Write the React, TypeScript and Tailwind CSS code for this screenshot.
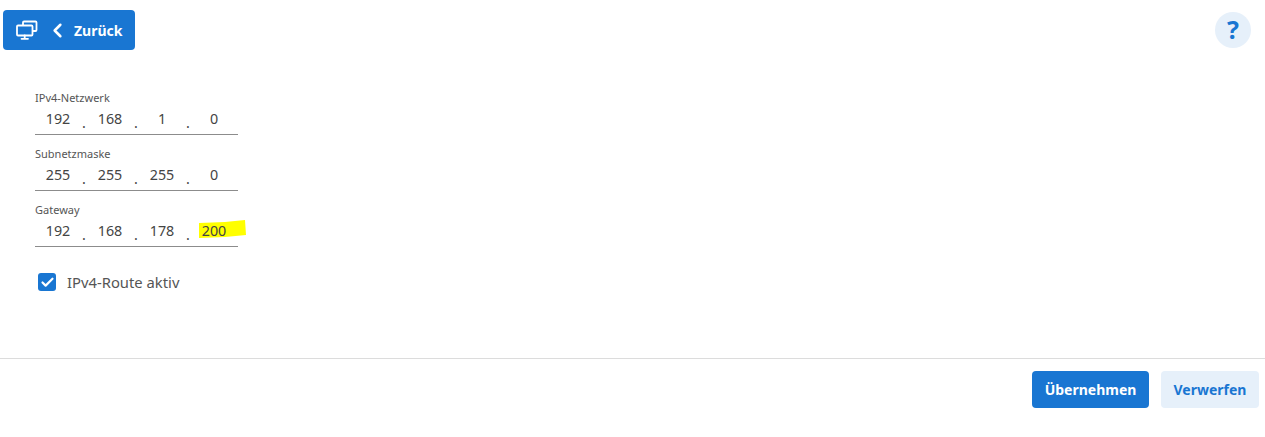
import React from "react";
import { ChevronLeft, Check } from "lucide-react";

const FIELDS = [
  { label: "IPv4-Netzwerk", octets: ["192", "168", "1", "0"] },
  { label: "Subnetzmaske", octets: ["255", "255", "255", "0"] },
  { label: "Gateway", octets: ["192", "168", "178", "200"], marked: true },
];

const MonitorsIcon = () => (
  <svg width="22" height="20" viewBox="0 0 22 20" fill="none" stroke="currentColor" strokeWidth="1.8" strokeLinejoin="round" strokeLinecap="round">
    <path d="M7 5V2.5a1 1 0 0 1 1-1h11.5a1 1 0 0 1 1 1V10a1 1 0 0 1-1 1H17" />
    <rect x="1" y="5.5" width="15.5" height="10" rx="1" fill="#1976d2" />
    <path d="M8.7 15.5v3M5.5 18.8h6.5" />
  </svg>
);

const Highlight = () => (
  <svg className="absolute left-[163px] top-[-1px]" width="50" height="24" viewBox="0 0 50 24">
    <path d="M1 6 L27 5 L47 3 L48 18 L27 20 L1 21 Z" fill="#ffff00" />
  </svg>
);

const IpField = ({ label, octets, marked }: { label: string; octets: string[]; marked?: boolean }) => (
  <div className="w-[203px]">
    <div className="h-[16px] text-[11px] leading-[16px] text-[#555]">{label}</div>
    <div className="relative flex h-[29px] items-center border-b border-[#8c8c8c] pb-[3px] text-[14.3px] text-[#444]">
      {marked && <Highlight />}
      {octets.map((octet, i) => (
        <React.Fragment key={i}>
          <span className="relative w-[46px] text-center">{octet}</span>
          {i < 3 && <span className="relative top-[4px] w-[6px] text-center">.</span>}
        </React.Fragment>
      ))}
    </div>
  </div>
);

export default function App() {
  return (
    <div className="flex h-[437px] w-full flex-col bg-white font-['Noto_Sans',sans-serif]">
      <div className="flex items-start justify-between pl-[3px] pr-[14px] pt-[10px]">
        <button className="flex h-[40px] w-[132px] items-center rounded-[4px] bg-[#1976d2] pl-[13px] text-[14px] font-bold text-white">
          <MonitorsIcon />
          <ChevronLeft className="ml-[8px] h-[23px] w-[23px]" strokeWidth={2.6} />
          <span className="ml-[5px]">Zurück</span>
        </button>
        <div className="mt-[2px] flex h-[36px] w-[36px] items-center justify-center rounded-full bg-[#e6f0fa] text-[25px] font-bold text-[#1976d2]">
          ?
        </div>
      </div>

      <div className="flex flex-col gap-[11px] pl-[35px] pt-[40px]">
        {FIELDS.map((f) => (
          <IpField key={f.label} {...f} />
        ))}
      </div>

      <label className="ml-[38px] mt-[24px] flex items-center gap-[11px] text-[14.8px] leading-[22px] text-[#555]">
        <span className="flex h-[18px] w-[18px] items-center justify-center rounded-[3px] bg-[#1976d2]">
          <Check className="h-[15px] w-[15px] text-white" strokeWidth={3.5} />
        </span>
        IPv4-Route aktiv
      </label>

      <div className="mt-[65px] flex justify-end gap-[12px] border-t border-[#dcdcdc] pr-[6px] pt-[12px]">
        <button className="h-[37px] w-[117px] rounded-[4px] bg-[#1976d2] text-[14px] font-bold text-white">Übernehmen</button>
        <button className="h-[37px] w-[98px] rounded-[4px] bg-[#e6f0fa] text-[14px] font-bold text-[#1976d2]">Verwerfen</button>
      </div>
    </div>
  );
}
